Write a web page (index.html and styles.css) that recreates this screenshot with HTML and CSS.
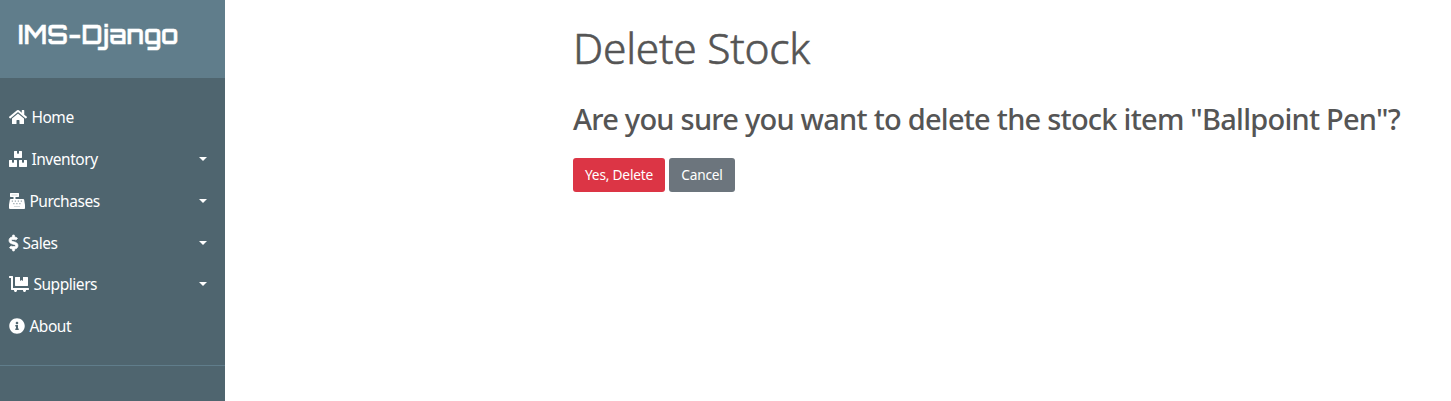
FILE: index.html
```html
<!DOCTYPE html>
<html lang="en">
<head>
<meta charset="utf-8">
<title>Delete Stock</title>
<link rel="stylesheet" href="styles.css">
</head>
<body>
<aside class="sidebar">
  <div class="brand"><span class="brand-name">IMS-Django</span></div>
  <nav class="menu">
    <a class="item"><svg class="icon" width="18" height="16" viewBox="0 0 576 512"><path d="M280.37 148.26L96 300.11V464a16 16 0 0 0 16 16l112.06-.29a16 16 0 0 0 15.92-16V368a16 16 0 0 1 16-16h64a16 16 0 0 1 16 16v95.64a16 16 0 0 0 16 16.05L464 480a16 16 0 0 0 16-16V300L295.67 148.26a12.19 12.19 0 0 0-15.3 0zM571.6 251.47L488 182.56V44.05a12 12 0 0 0-12-12h-56a12 12 0 0 0-12 12v72.61L318.47 43a48 48 0 0 0-61 0L4.34 251.47a12 12 0 0 0-1.6 16.9l25.5 31A12 12 0 0 0 45.15 301l235.22-193.74a12.19 12.19 0 0 1 15.3 0L530.9 301a12 12 0 0 0 16.9-1.6l25.5-31a12 12 0 0 0-1.7-16.93z"/></svg><span class="label">Home</span></a>
    <a class="item"><svg class="icon" width="18" height="16" viewBox="0 0 576 512"><path d="M560 288h-80v96l-32-21.3-32 21.3v-96h-80c-8.8 0-16 7.2-16 16v192c0 8.8 7.2 16 16 16h224c8.8 0 16-7.2 16-16V304c0-8.8-7.2-16-16-16zm-384-64h224c8.8 0 16-7.2 16-16V16c0-8.8-7.2-16-16-16h-80v96l-32-21.3L256 96V0h-80c-8.8 0-16 7.2-16 16v192c0 8.8 7.2 16 16 16zm64 64h-80v96l-32-21.3L96 384v-96H16c-8.8 0-16 7.2-16 16v192c0 8.8 7.2 16 16 16h224c8.8 0 16-7.2 16-16V304c0-8.8-7.2-16-16-16z"/></svg><span class="label">Inventory</span><i class="caret"></i></a>
    <a class="item"><svg class="icon" width="16" height="16" viewBox="0 0 512 512"><path d="M511.1 378.8l-26.7-160c-2.6-15.4-15.9-26.7-31.6-26.7H208v-64h96c8.8 0 16-7.2 16-16V16c0-8.8-7.2-16-16-16H48c-8.8 0-16 7.2-16 16v96c0 8.8 7.2 16 16 16h96v64H59.1c-15.6 0-29 11.3-31.6 26.7L.8 378.7c-.6 3.5-.9 7-.9 10.5V480c0 17.7 14.3 32 32 32h448c17.7 0 32-14.3 32-32v-90.7c.1-3.5-.2-7-.8-10.5z"/><path class="slots" d="M80 48h192v32H80zM160 416h192v32H160z"/><path class="keys" d="M88 236h40v40H88zM184 236h40v40h-40zM280 236h40v40h-40zM376 236h40v40h-40zM136 316h40v40h-40zM232 316h40v40h-40zM328 316h40v40h-40z"/></svg><span class="label">Purchases</span><i class="caret"></i></a>
    <a class="item"><svg class="icon bold" width="9" height="16" viewBox="0 0 288 512"><path d="M209.2 233.4l-108-31.6C88.7 198.2 80 186.5 80 173.5c0-16.3 13.2-29.5 29.5-29.5h66.3c12.2 0 24.2 3.7 34.2 10.5 6.1 4.1 14.3 3.1 19.5-2l34.8-34c7.1-6.9 6.1-18.4-1.8-24.5C238 74.8 207.4 64.1 176 64V16c0-8.8-7.2-16-16-16h-32c-8.8 0-16 7.2-16 16v48h-2.5C45.8 64-5.4 118.7.5 183.6c4.2 46.1 39.4 83.6 83.8 96.6l102.5 30c12.5 3.7 21.2 15.3 21.2 28.3 0 16.3-13.2 29.5-29.5 29.5h-66.3C100 368 88 364.3 78 357.5c-6.1-4.1-14.3-3.1-19.5 2l-34.8 34c-7.1 6.9-6.1 18.4 1.8 24.5 24.5 19.2 55.1 29.9 86.5 30v48c0 8.8 7.2 16 16 16h32c8.8 0 16-7.2 16-16v-48.2c46.6-.9 90.3-28.6 105.7-72.7 21.5-61.6-14.6-124.8-72.5-141.7z"/></svg><span class="label">Sales</span><i class="caret"></i></a>
    <a class="item"><svg class="icon" width="20" height="16" viewBox="0 0 640 512"><path d="M208 320h384c8.8 0 16-7.2 16-16V48c0-8.8-7.2-16-16-16H448v128l-48-32-48 32V32H208c-8.8 0-16 7.2-16 16v256c0 8.8 7.2 16 16 16zm416 64H128V16c0-8.8-7.2-16-16-16H16C7.2 0 0 7.2 0 16v32c0 8.8 7.2 16 16 16h48v368c0 8.8 7.2 16 16 16h82.9c-1.8 5-2.9 10.4-2.9 16 0 26.5 21.5 48 48 48s48-21.5 48-48c0-5.6-1.2-11-2.9-16H451c-1.8 5-2.9 10.4-2.9 16 0 26.5 21.5 48 48 48s48-21.5 48-48c0-5.6-1.2-11-2.9-16H624c8.8 0 16-7.2 16-16v-32c0-8.8-7.2-16-16-16z"/></svg><span class="label">Suppliers</span><i class="caret"></i></a>
    <a class="item"><svg class="icon" width="16" height="16" viewBox="0 0 512 512"><path d="M256 8C119.043 8 8 119.083 8 256c0 136.997 111.043 248 248 248s248-111.003 248-248C504 119.083 392.957 8 256 8zm0 110c23.196 0 42 18.804 42 42s-18.804 42-42 42-42-18.804-42-42 18.804-42 42-42zm56 254c0 6.627-5.373 12-12 12h-88c-6.627 0-12-5.373-12-12v-24c0-6.627 5.373-12 12-12h12v-64h-12c-6.627 0-12-5.373-12-12v-24c0-6.627 5.373-12 12-12h64c6.627 0 12 5.373 12 12v100h12c6.627 0 12 5.373 12 12v24z"/></svg><span class="label">About</span></a>
  </nav>
</aside>
<main class="content">
  <h1 class="title">Delete Stock</h1>
  <h2 class="question">Are you sure you want to delete the stock item "Ballpoint Pen"?</h2>
  <div class="actions">
    <button class="btn danger">Yes, Delete</button>
    <button class="btn secondary">Cancel</button>
  </div>
</main>
</body>
</html>
```
FILE: styles.css
```css
* { box-sizing: border-box; }
body {
  margin: 0;
  height: 401px;
  display: flex;
  overflow: hidden;
  background: #fff;
  color: #555;
  font-family: "Segoe UI", "Noto Sans", sans-serif;
}
.sidebar { width: 225px; flex: none; background: #4f656f; color: #fff; }
.brand { height: 78px; padding: 17px 18px; background: #607d8b; }
.brand-name {
  display: block;
  font: 600 25px/36px "Orbitron", "DejaVu Sans", sans-serif;
  letter-spacing: 0.35px;
  -webkit-text-stroke: 0.4px #fff;
  white-space: nowrap;
}
.menu {
  height: 288px;
  padding: 18.4px 18px 0 9px;
  border-bottom: 1px solid #607d8b;
}
.item { display: flex; align-items: center; height: 41.8px; font-size: 15.5px; }
.icon { flex: none; margin-right: 4.4px; fill: currentColor; }
.slots { fill: #d3d9dc; }
.keys { fill: #9aa8ae; }
.bold { overflow: visible; stroke: currentColor; stroke-width: 22; }
.label { letter-spacing: -0.45px; line-height: 24px; }
.caret {
  margin-left: auto;
  border-top: 4.8px solid #fff;
  border-left: 4.8px solid transparent;
  border-right: 4.8px solid transparent;
}
.content { padding: 19px 0 0 348px; white-space: nowrap; }
.title {
  margin: 0;
  font-size: 42.5px;
  font-weight: 300;
  line-height: 58px;
  letter-spacing: -0.25px;
  -webkit-text-stroke: 0.6px #555;
}
.question {
  margin: 24px 0 0;
  font-size: 29px;
  font-weight: 500;
  line-height: 36px;
  letter-spacing: -0.76px;
}
.actions { display: flex; gap: 4px; margin-top: 21px; }
.btn {
  height: 34px;
  padding: 0 0 1px;
  border: 0;
  border-radius: 3px;
  color: #fff;
  font: 13.7px/21px "Segoe UI", "Noto Sans", sans-serif;
  letter-spacing: -0.2px;
}
.danger { width: 92px; background: #dc3545; }
.secondary { width: 66px; background: #6c757d; }
```
